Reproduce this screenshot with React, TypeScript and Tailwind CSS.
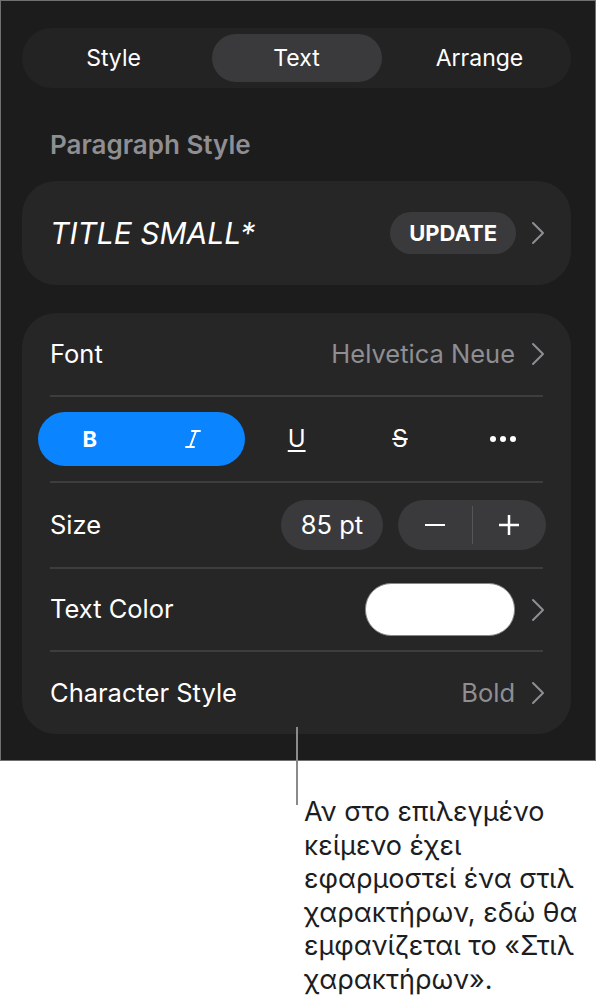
const font = "font-['Inter','Noto_Sans',sans-serif]";

function Chevron({ className = "" }: { className?: string }) {
  return (
    <svg width="14" height="24" viewBox="0 0 14 24" className={className} fill="none">
      <path d="M2 2l10 10-10 10" stroke="#8e8e93" strokeWidth="2" strokeLinecap="round" strokeLinejoin="round" />
    </svg>
  );
}

function Divider() {
  return <div className="mx-7 h-[2px] bg-[#3d3d3f]" />;
}

export default function App() {
  return (
    <div className={`w-[596px] bg-white ${font}`}>
      {/* Panel */}
      <div className="flex h-[761px] flex-col border border-[#707070] bg-[#1c1c1c] pl-[21px] pr-[24px] pt-[27px]">
        {/* Tabs */}
        <div className="grid h-[60px] grid-cols-3 items-center rounded-[30px] bg-[#232323] text-[23px] text-white">
          <div className="flex justify-center">Style</div>
          <div className="flex justify-center">
            <div className="flex h-[48px] w-[170px] items-center justify-center rounded-[24px] bg-[#3a3a3c]">Text</div>
          </div>
          <div className="flex justify-center">Arrange</div>
        </div>

        <div className="mt-[37px] pl-7 text-[26px] font-semibold text-[#8e8e93]">Paragraph Style</div>

        {/* Paragraph style card */}
        <div className="mt-[17px] flex h-[104px] items-center rounded-[34px] bg-[#262626] pl-7 pr-[26px]">
          <span className="flex-1 text-[30px] italic text-white">TITLE SMALL*</span>
          <span className="flex h-[42px] items-center rounded-[21px] bg-[#3a3a3c] px-[19px] text-[22px] font-bold text-white">UPDATE</span>
          <Chevron className="ml-[15px]" />
        </div>

        {/* Text card */}
        <div className="mt-[28px] flex flex-col rounded-[34px] bg-[#262626] text-[25.5px] text-white">
          <div className="flex h-[82px] items-center pl-7 pr-[26px]">
            <span className="flex-1">Font</span>
            <span className="text-[#8e8e93]">Helvetica Neue</span>
            <Chevron className="ml-[16px]" />
          </div>
          <Divider />
          <div className="flex h-[84px] items-center px-4">
            <div className="flex h-[54px] w-[207px] items-center rounded-[27px] bg-[#0a84ff]">
              <span className="flex-1 text-center text-[22px] font-bold">B</span>
              <div className="flex flex-1 justify-center">
                <svg width="16" height="20" viewBox="0 0 16 20" fill="none" stroke="white" strokeWidth="2" strokeLinecap="round">
                  <path d="M7 2h8M1 18h8M11 2L5 18" />
                </svg>
              </div>
            </div>
            <div className="flex flex-1 justify-center">
              <span className="text-[24px] underline decoration-2 underline-offset-[3px]">U</span>
            </div>
            <div className="flex flex-1 justify-center">
              <span className="text-[24px] line-through decoration-2">S</span>
            </div>
            <div className="flex flex-1 justify-center gap-[4px]">
              <span className="h-[6px] w-[6px] rounded-full bg-white" />
              <span className="h-[6px] w-[6px] rounded-full bg-white" />
              <span className="h-[6px] w-[6px] rounded-full bg-white" />
            </div>
          </div>
          <Divider />
          <div className="flex h-[84px] items-center pl-7 pr-[25px]">
            <span className="flex-1">Size</span>
            <span className="flex h-[50px] w-[102px] items-center justify-center rounded-[25px] bg-[#3a3a3c]">85 pt</span>
            <div className="ml-[15px] flex h-[50px] w-[148px] items-center rounded-[25px] bg-[#3a3a3c]">
              <div className="flex flex-1 justify-center">
                <span className="h-[2.5px] w-[20px] bg-white" />
              </div>
              <div className="h-[38px] w-px bg-[#555]" />
              <div className="flex flex-1 justify-center">
                <svg width="22" height="22" viewBox="0 0 22 22" stroke="white" strokeWidth="2.5">
                  <path d="M11 1v20M1 11h20" />
                </svg>
              </div>
            </div>
          </div>
          <Divider />
          <div className="flex h-[81px] items-center pl-7 pr-[26px]">
            <span className="flex-1">Text Color</span>
            <span className="h-[53px] w-[150px] rounded-[26px] border border-[#888] bg-white" />
            <Chevron className="ml-[16px]" />
          </div>
          <Divider />
          <div className="flex h-[82px] items-center pl-7 pr-[26px]">
            <span className="flex-1">Character Style</span>
            <span className="text-[#8e8e93]">Bold</span>
            <Chevron className="ml-[16px]" />
          </div>
        </div>
      </div>

      {/* Callout */}
      <div className="relative h-[234px]">
        <div className="absolute left-[296px] top-[-34px] h-[78px] w-[2px] bg-[#8a8a8a]" />
        <p className="absolute left-[304px] top-[34px] w-[288px] text-[27px] leading-[33.6px] text-[#1d1d1f]">
          Αν στο επιλεγμένο κείμενο έχει εφαρμοστεί ένα στιλ χαρακτήρων, εδώ θα εμφανίζεται το «Στιλ χαρακτήρων».
        </p>
      </div>
    </div>
  );
}
